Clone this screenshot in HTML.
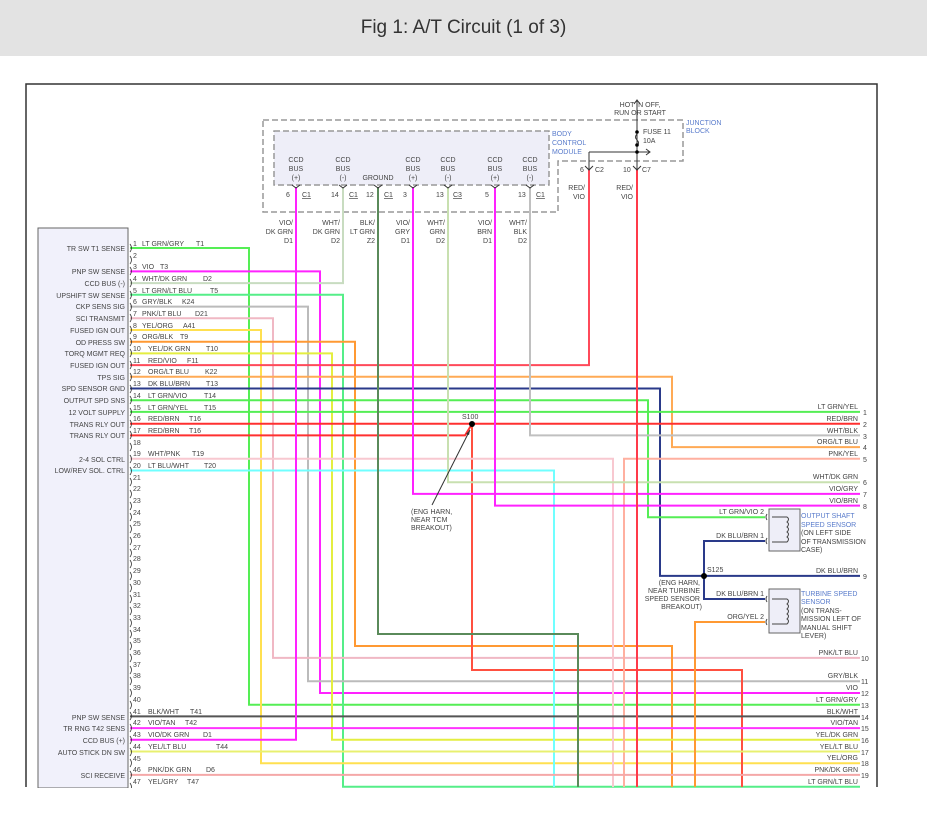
<!DOCTYPE html>
<html><head><meta charset="utf-8"><style>
html,body{margin:0;padding:0;background:#fff;width:927px;height:813px;overflow:hidden}
.hdr{position:absolute;left:0;top:0;width:927px;height:56px;background:#e3e3e3;text-align:center;font:19px "Liberation Sans",sans-serif;color:#333;line-height:56px}
svg{position:absolute;left:0;top:0}
text{font-family:"Liberation Sans",sans-serif;font-size:7px;fill:#444}
.b{fill:#5a7ccc}
.w{fill:none;stroke-width:2}
</style></head><body>
<div class="hdr">Fig 1: A/T Circuit (1 of 3)</div>
<svg width="927" height="813" viewBox="0 0 927 813">
<!-- frame -->
<path d="M26 787 V84 H877 V787" fill="none" stroke="#333" stroke-width="1.5"/>
<!-- TCM box -->
<rect x="38" y="228" width="90" height="560" fill="#f1f1fb" stroke="#666" stroke-width="1"/>
<!-- junction / BCM dashed -->
<path d="M263 120 H683 V161 H558 V212 H263 Z" fill="none" stroke="#999" stroke-width="1.5" stroke-dasharray="6,3"/>
<rect x="274" y="131" width="275" height="54" fill="#eeeef8" stroke="#999" stroke-width="1.5" stroke-dasharray="6,3"/>

<!-- wires -->
<g class="w">
<path d="M130 248 H249 V704.7 H860" stroke="#55ee55"/>
<path d="M130 271.4 H320 V693 H860" stroke="#ff22ff"/>
<path d="M130 283.1 H343 V187" stroke="#c8dcc0"/>
<path d="M130 294.8 H343 V786.7 H860" stroke="#55ee88"/>
<path d="M130 306.6 H308 V681.3 H860" stroke="#bbbbbb"/>
<path d="M130 318.3 H273 V657.9 H860" stroke="#f0b8c4"/>
<path d="M130 330 H261 V763.2 H860" stroke="#ffe050"/>
<path d="M130 341.7 H355 V646 H672 V787" stroke="#ff9933"/>
<path d="M130 353.4 H332 V739.8 H860" stroke="#e4ee40"/>
<path d="M130 365.1 H589 V170" stroke="#ff4a5a"/>
<path d="M130 376.8 H672 V447.1 H860" stroke="#ffaa55"/>
<path d="M130 388.5 H660 V575.9 H860" stroke="#2a3a8a"/>
<path d="M130 400.2 H648 V517.3 H765" stroke="#55ee55"/>
<path d="M130 411.9 H860" stroke="#55ee55"/>
<path d="M130 423.7 H860" stroke="#ff3030"/>
<path d="M130 435.4 H465 L472 424" stroke="#ff3030"/>
<path d="M472 424 V670 H742 V787" stroke="#ff5040"/>
<path d="M130 458.8 H613 V787" stroke="#f8c8d0"/>
<path d="M860 458.8 H624 V787" stroke="#ffb0a0"/>
<path d="M130 470.5 H554 V787" stroke="#70ffff"/>
<path d="M130 716.4 H860" stroke="#555"/>
<path d="M130 728.1 H860" stroke="#ff33ff"/>
<path d="M130 739.8 H296 V187" stroke="#ff22ff"/>
<path d="M130 751.5 H860" stroke="#e8f070"/>
<path d="M130 774.9 H860" stroke="#f4a8a8"/>
<path d="M378 187 V634 H578 V787" stroke="#5a8a5a"/>
<path d="M413 187 V493.9 H860" stroke="#ff22ff"/>
<path d="M448 187 V482.2 H860" stroke="#c8e0b0"/>
<path d="M495 187 V505.6 H860" stroke="#ff22ff"/>
<path d="M530 187 V435.4 H860" stroke="#c0c0c0"/>
<path d="M637 170 V787" stroke="#ff3a4a"/>
<path d="M765 622 H695 V787" stroke="#ff9933"/>
<path d="M704 576 V541 H765 M704 576 V599 H765" stroke="#2a3a8a"/>
</g>
<circle cx="472" cy="424" r="3" fill="#000"/>
<circle cx="704" cy="576" r="3" fill="#000"/>
<path d="M432 505 L470 430" stroke="#333" stroke-width="1" fill="none"/>
<path d="M470 430 l-4 4 l3 1 z" fill="#333"/>
<text x="462" y="419">S100</text>
<text x="411" y="514">(ENG HARN,</text><text x="411" y="522">NEAR TCM</text><text x="411" y="530">BREAKOUT)</text>
<text x="707" y="572">S125</text>
<text x="700" y="585" text-anchor="end">(ENG HARN,</text><text x="700" y="593" text-anchor="end">NEAR TURBINE</text><text x="700" y="601" text-anchor="end">SPEED SENSOR</text><text x="702" y="609" text-anchor="end">BREAKOUT)</text>

<!-- junction block fuse -->
<g stroke="#333" stroke-width="1" fill="none">
<path d="M637 101 V170 M634 104 L637 100 L640 104"/>
<path d="M637 134 q-3 3 0 6 q3 3 0 6"/>
<path d="M589 152 H650 M646 149 L650 152 L646 155"/>
<path d="M589 152 V170"/>
<path d="M585 166 l4 4 l4 -4 M633 166 l4 4 l4 -4"/>
</g>
<circle cx="637" cy="132" r="1.8" fill="#000"/><circle cx="637" cy="145" r="1.8" fill="#000"/><circle cx="637" cy="152" r="1.8" fill="#000"/>
<text x="640" y="107" text-anchor="middle">HOT IN OFF,</text><text x="640" y="115" text-anchor="middle">RUN OR START</text>
<text x="643" y="134">FUSE 11</text><text x="643" y="143">10A</text>
<text class="b" x="686" y="125">JUNCTION</text><text class="b" x="686" y="133">BLOCK</text>
<text class="b" x="552" y="136">BODY</text><text class="b" x="552" y="145">CONTROL</text><text class="b" x="552" y="154">MODULE</text>
<text x="580" y="172">6</text><text x="595" y="172">C2</text>
<text x="623" y="172">10</text><text x="642" y="172">C7</text>
<text x="585" y="190" text-anchor="end">RED/</text><text x="585" y="199" text-anchor="end">VIO</text>
<text x="633" y="190" text-anchor="end">RED/</text><text x="633" y="199" text-anchor="end">VIO</text>

<!-- BCM connectors -->
<g text-anchor="middle">
<text x="296" y="162">CCD</text><text x="296" y="171">BUS</text><text x="296" y="180">(+)</text>
<text x="343" y="162">CCD</text><text x="343" y="171">BUS</text><text x="343" y="180">(-)</text>
<text x="378" y="180">GROUND</text>
<text x="413" y="162">CCD</text><text x="413" y="171">BUS</text><text x="413" y="180">(+)</text>
<text x="448" y="162">CCD</text><text x="448" y="171">BUS</text><text x="448" y="180">(-)</text>
<text x="495" y="162">CCD</text><text x="495" y="171">BUS</text><text x="495" y="180">(+)</text>
<text x="530" y="162">CCD</text><text x="530" y="171">BUS</text><text x="530" y="180">(-)</text>
</g>
<g stroke="#333" stroke-width="1" fill="none">
<path d="M292 185 l4 3 l4 -3 M339 185 l4 3 l4 -3 M374 185 l4 3 l4 -3 M409 185 l4 3 l4 -3 M444 185 l4 3 l4 -3 M491 185 l4 3 l4 -3 M526 185 l4 3 l4 -3"/>
</g>
<text x="286" y="197">6</text><text x="302" y="197" text-decoration="underline">C1</text>
<text x="331" y="197">14</text><text x="349" y="197" text-decoration="underline">C1</text>
<text x="366" y="197">12</text><text x="384" y="197" text-decoration="underline">C1</text>
<text x="403" y="197">3</text>
<text x="436" y="197">13</text><text x="453" y="197" text-decoration="underline">C3</text>
<text x="485" y="197">5</text>
<text x="518" y="197">13</text><text x="536" y="197" text-decoration="underline">C1</text>
<g text-anchor="end">
<text x="293" y="225">VIO/</text><text x="293" y="234">DK GRN</text><text x="293" y="243">D1</text>
<text x="340" y="225">WHT/</text><text x="340" y="234">DK GRN</text><text x="340" y="243">D2</text>
<text x="375" y="225">BLK/</text><text x="375" y="234">LT GRN</text><text x="375" y="243">Z2</text>
<text x="410" y="225">VIO/</text><text x="410" y="234">GRY</text><text x="410" y="243">D1</text>
<text x="445" y="225">WHT/</text><text x="445" y="234">GRN</text><text x="445" y="243">D2</text>
<text x="492" y="225">VIO/</text><text x="492" y="234">BRN</text><text x="492" y="243">D1</text>
<text x="527" y="225">WHT/</text><text x="527" y="234">BLK</text><text x="527" y="243">D2</text>
</g>

<!-- sensors -->
<rect x="769" y="509" width="31" height="42" fill="#eeeef8" stroke="#666"/>
<rect x="769" y="589" width="31" height="44" fill="#eeeef8" stroke="#666"/>
<g stroke="#444" stroke-width="1" fill="none">
<path d="M767 514 q-2 3 0 6 M767 538 q-2 3 0 6 M772 517 H787 q3 2 0 5 q3 2 0 5 q3 2 0 5 q3 2 0 5 q3 2 0 5 H772"/>
<path d="M767 596 q-2 3 0 6 M767 619 q-2 3 0 6 M772 599 H787 q3 2 0 5 q3 2 0 5 q3 2 0 5 q3 2 0 5 q3 2 0 5 H772"/>
</g>
<text x="764" y="514" text-anchor="end">LT GRN/VIO 2</text>
<text x="764" y="538" text-anchor="end">DK BLU/BRN 1</text>
<text x="764" y="596" text-anchor="end">DK BLU/BRN 1</text>
<text x="764" y="619" text-anchor="end">ORG/YEL 2</text>
<text class="b" x="801" y="518">OUTPUT SHAFT</text><text class="b" x="801" y="527">SPEED SENSOR</text>
<text x="801" y="535">(ON LEFT SIDE</text><text x="801" y="544">OF TRANSMISSION</text><text x="801" y="552">CASE)</text>
<text class="b" x="801" y="596">TURBINE SPEED</text><text class="b" x="801" y="604">SENSOR</text>
<text x="801" y="613">(ON TRANS-</text><text x="801" y="621">MISSION LEFT OF</text><text x="801" y="630">MANUAL SHIFT</text><text x="801" y="638">LEVER)</text>

<!-- right labels -->
<g text-anchor="end">
<text x="858" y="409">LT GRN/YEL</text><text x="858" y="421">RED/BRN</text><text x="858" y="433">WHT/BLK</text>
<text x="858" y="444">ORG/LT BLU</text><text x="858" y="456">PNK/YEL</text><text x="858" y="479">WHT/DK GRN</text>
<text x="858" y="491">VIO/GRY</text><text x="858" y="503">VIO/BRN</text><text x="858" y="573">DK BLU/BRN</text>
<text x="858" y="655">PNK/LT BLU</text><text x="858" y="678">GRY/BLK</text><text x="858" y="690">VIO</text>
<text x="858" y="702">LT GRN/GRY</text><text x="858" y="714">BLK/WHT</text><text x="858" y="725">VIO/TAN</text>
<text x="858" y="737">YEL/DK GRN</text><text x="858" y="749">YEL/LT BLU</text><text x="858" y="760">YEL/ORG</text>
<text x="858" y="772">PNK/DK GRN</text><text x="858" y="784">LT GRN/LT BLU</text>
</g>
<g>
<text x="863" y="415">1</text><text x="863" y="427">2</text><text x="863" y="439">3</text><text x="863" y="450">4</text>
<text x="863" y="462">5</text><text x="863" y="485">6</text><text x="863" y="497">7</text><text x="863" y="509">8</text>
<text x="863" y="579">9</text><text x="861" y="661">10</text><text x="861" y="684">11</text><text x="861" y="696">12</text>
<text x="861" y="708">13</text><text x="861" y="720">14</text><text x="861" y="731">15</text><text x="861" y="743">16</text>
<text x="861" y="755">17</text><text x="861" y="766">18</text><text x="861" y="778">19</text>
</g>

<!-- TCM left labels -->
<g text-anchor="end">
<text x="125" y="251">TR SW T1 SENSE</text><text x="125" y="274">PNP SW SENSE</text><text x="125" y="286">CCD BUS (-)</text>
<text x="125" y="298">UPSHIFT SW SENSE</text><text x="125" y="309">CKP SENS SIG</text><text x="125" y="321">SCI TRANSMIT</text>
<text x="125" y="333">FUSED IGN OUT</text><text x="125" y="345">OD PRESS SW</text><text x="125" y="356">TORQ MGMT REQ</text>
<text x="125" y="368">FUSED IGN OUT</text><text x="125" y="380">TPS SIG</text><text x="125" y="391">SPD SENSOR GND</text>
<text x="125" y="403">OUTPUT SPD SNS</text><text x="125" y="415">12 VOLT SUPPLY</text><text x="125" y="427">TRANS RLY OUT</text>
<text x="125" y="438">TRANS RLY OUT</text><text x="125" y="462">2-4 SOL CTRL</text><text x="125" y="473">LOW/REV SOL. CTRL</text>
<text x="125" y="720">PNP SW SENSE</text><text x="125" y="731">TR RNG T42 SENS</text><text x="125" y="743">CCD BUS (+)</text>
<text x="125" y="755">AUTO STICK DN SW</text><text x="125" y="778">SCI RECEIVE</text>
</g>
<!-- pin brackets -->
<g stroke="#333" stroke-width="0.8" fill="none">
<path d="M130 244 q3 4 0 8 M130 256 q3 4 0 8 M130 267 q3 4 0 8 M130 279 q3 4 0 8 M130 291 q3 4 0 8 M130 303 q3 4 0 8 M130 314 q3 4 0 8 M130 326 q3 4 0 8 M130 338 q3 4 0 8 M130 349 q3 4 0 8 M130 361 q3 4 0 8 M130 373 q3 4 0 8 M130 385 q3 4 0 8 M130 396 q3 4 0 8 M130 408 q3 4 0 8 M130 420 q3 4 0 8 M130 431 q3 4 0 8 M130 443 q3 4 0 8 M130 455 q3 4 0 8 M130 467 q3 4 0 8 M130 478 q3 4 0 8 M130 490 q3 4 0 8 M130 502 q3 4 0 8 M130 513 q3 4 0 8 M130 525 q3 4 0 8 M130 537 q3 4 0 8 M130 549 q3 4 0 8 M130 560 q3 4 0 8 M130 572 q3 4 0 8 M130 584 q3 4 0 8 M130 595 q3 4 0 8 M130 607 q3 4 0 8 M130 619 q3 4 0 8 M130 630 q3 4 0 8 M130 642 q3 4 0 8 M130 654 q3 4 0 8 M130 666 q3 4 0 8 M130 677 q3 4 0 8 M130 689 q3 4 0 8 M130 701 q3 4 0 8 M130 712 q3 4 0 8 M130 724 q3 4 0 8 M130 736 q3 4 0 8 M130 748 q3 4 0 8 M130 759 q3 4 0 8 M130 771 q3 4 0 8 M130 783 q3 4 0 8"/>
</g>
<g>
<text x="133" y="246">1</text><text x="142" y="246">LT GRN/GRY</text><text x="196" y="246">T1</text>
<text x="133" y="258">2</text>
<text x="133" y="269">3</text><text x="142" y="269">VIO</text><text x="160" y="269">T3</text>
<text x="133" y="281">4</text><text x="142" y="281">WHT/DK GRN</text><text x="203" y="281">D2</text>
<text x="133" y="293">5</text><text x="142" y="293">LT GRN/LT BLU</text><text x="210" y="293">T5</text>
<text x="133" y="304">6</text><text x="142" y="304">GRY/BLK</text><text x="182" y="304">K24</text>
<text x="133" y="316">7</text><text x="142" y="316">PNK/LT BLU</text><text x="195" y="316">D21</text>
<text x="133" y="328">8</text><text x="142" y="328">YEL/ORG</text><text x="183" y="328">A41</text>
<text x="133" y="339">9</text><text x="142" y="339">ORG/BLK</text><text x="180" y="339">T9</text>
<text x="133" y="351">10</text><text x="148" y="351">YEL/DK GRN</text><text x="206" y="351">T10</text>
<text x="133" y="363">11</text><text x="148" y="363">RED/VIO</text><text x="187" y="363">F11</text>
<text x="133" y="374">12</text><text x="148" y="374">ORG/LT BLU</text><text x="205" y="374">K22</text>
<text x="133" y="386">13</text><text x="148" y="386">DK BLU/BRN</text><text x="206" y="386">T13</text>
<text x="133" y="398">14</text><text x="148" y="398">LT GRN/VIO</text><text x="204" y="398">T14</text>
<text x="133" y="410">15</text><text x="148" y="410">LT GRN/YEL</text><text x="204" y="410">T15</text>
<text x="133" y="421">16</text><text x="148" y="421">RED/BRN</text><text x="189" y="421">T16</text>
<text x="133" y="433">17</text><text x="148" y="433">RED/BRN</text><text x="189" y="433">T16</text>
<text x="133" y="445">18</text>
<text x="133" y="456">19</text><text x="148" y="456">WHT/PNK</text><text x="192" y="456">T19</text>
<text x="133" y="468">20</text><text x="148" y="468">LT BLU/WHT</text><text x="204" y="468">T20</text>
<text x="133" y="480">21</text><text x="133" y="491">22</text><text x="133" y="503">23</text><text x="133" y="515">24</text>
<text x="133" y="526">25</text><text x="133" y="538">26</text><text x="133" y="550">27</text><text x="133" y="561">28</text>
<text x="133" y="573">29</text><text x="133" y="585">30</text><text x="133" y="597">31</text><text x="133" y="608">32</text>
<text x="133" y="620">33</text><text x="133" y="632">34</text><text x="133" y="643">35</text><text x="133" y="655">36</text>
<text x="133" y="667">37</text><text x="133" y="678">38</text><text x="133" y="690">39</text><text x="133" y="702">40</text>
<text x="133" y="714">41</text><text x="148" y="714">BLK/WHT</text><text x="190" y="714">T41</text>
<text x="133" y="725">42</text><text x="148" y="725">VIO/TAN</text><text x="185" y="725">T42</text>
<text x="133" y="737">43</text><text x="148" y="737">VIO/DK GRN</text><text x="203" y="737">D1</text>
<text x="133" y="749">44</text><text x="148" y="749">YEL/LT BLU</text><text x="216" y="749">T44</text>
<text x="133" y="761">45</text>
<text x="133" y="772">46</text><text x="148" y="772">PNK/DK GRN</text><text x="206" y="772">D6</text>
<text x="133" y="784">47</text><text x="148" y="784">YEL/GRY</text><text x="187" y="784">T47</text>
</g>
<rect x="0" y="788" width="927" height="25" fill="#fff"/>
</svg>
</body></html>
